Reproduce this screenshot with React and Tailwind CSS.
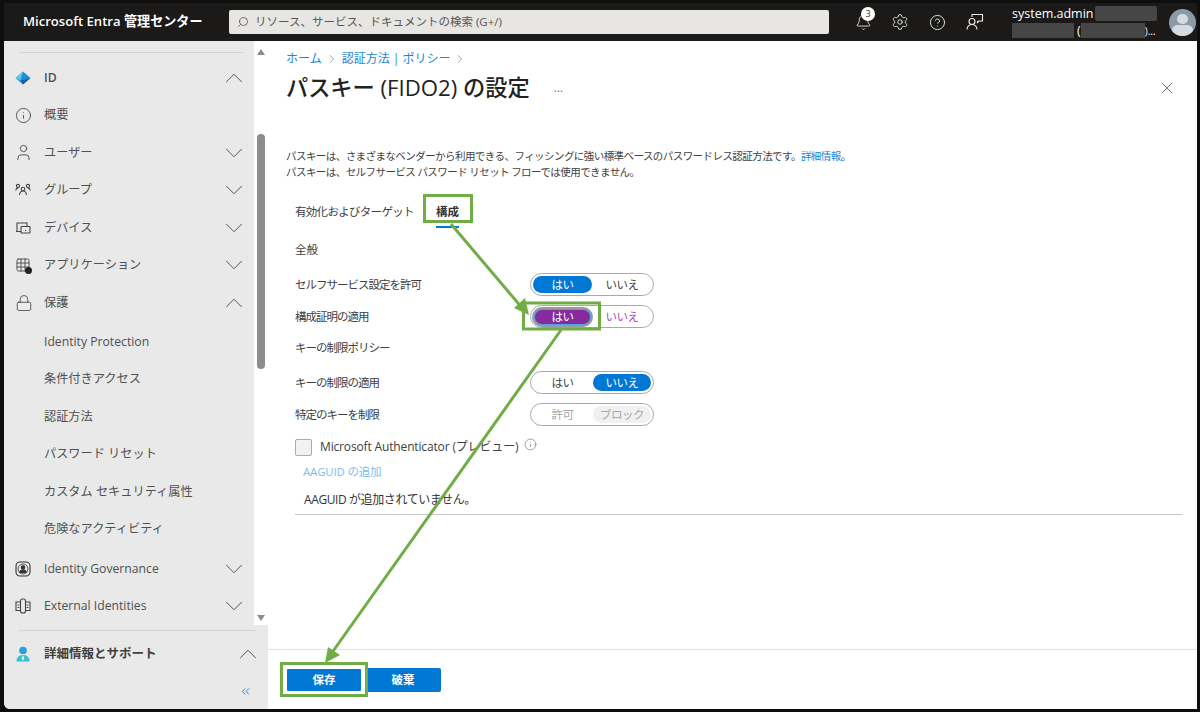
import React from "react";
import { ChevronDown, ChevronUp, ChevronRight, Info, User, Lock, Grid3x3, Bell, Settings, CircleHelp, Search, X, ChevronsLeft } from "lucide-react";

const font = "font-['Open_Sans','Noto_Sans_CJK_JP',sans-serif]";

function GroupIcon() {
  return (
    <svg width="16" height="16" viewBox="0 0 16 16" fill="none" stroke="#444" strokeWidth="1.100">
      <circle cx="3" cy="4" r="1.600" /><circle cx="13" cy="4" r="1.600" /><circle cx="8" cy="7" r="1.800" />
      <path d="M.7 8.500c.2-1.500 1-2.400 2.300-2.600M15.300 8.500c-.2-1.500-1-2.400-2.300-2.600M4.500 13c.2-2.400 1.600-4 3.500-4s3.300 1.600 3.500 4" />
    </svg>
  );
}
function IdIcon() {
  return (
    <svg width="16" height="16" viewBox="0 0 16 16">
      <path d="M8 1.500 15.500 8 8 14.500.5 8z" fill="#1f8fd8" />
      <path d="M8 1.500.5 8l5 2.500z" fill="#5cc4ee" />
      <path d="M8 14.500 5.500 10.500 10.500 9.500 15.500 8z" fill="#1463a8" />
    </svg>
  );
}
function GovIcon() {
  return (
    <svg width="16" height="16" viewBox="0 0 16 16" fill="none" stroke="#333" strokeWidth="1.100">
      <rect x="1" y="1" width="14" height="14" rx="4" />
      <circle cx="8" cy="8" r="5" strokeWidth=".8" />
      <circle cx="8" cy="6.500" r="1.700" fill="#333" />
      <path d="M4.800 11.500c0-1.500 1.400-2.500 3.200-2.500s3.200 1 3.200 2.500z" fill="#333" />
    </svg>
  );
}
function ExtIcon() {
  return (
    <svg width="16" height="16" viewBox="0 0 16 16" fill="none" stroke="#444" strokeWidth="1.100">
      <path d="M5.500 4H1v8.500h4.500M10.500 4H15v8.500h-4.500" />
      <rect x="5.500" y="1" width="5" height="14" rx="2" />
      <path d="M2.500 7h2M2.500 9.500h2M11.500 7h2M11.500 9.500h2" strokeWidth=".9" />
    </svg>
  );
}
function AppIcon() {
  return (
    <span className="relative flex">
      <Grid3x3 size={16} strokeWidth={1.200} color="#333" />
      <span className="absolute -right-[1px] -bottom-[1px] w-[7px] h-[7px] rounded-full bg-[#222]" />
    </span>
  );
}
function DeviceIcon() {
  return (
    <svg width="16" height="16" viewBox="0 0 16 16" fill="none" stroke="#444" strokeWidth="1.100">
      <path d="M2 11.500V3h10v3" />
      <path d="M1 11.500h5" />
      <rect x="6" y="6.500" width="9" height="6.500" rx=".5" fill="#e9e9e9" />
      <path d="M10 10.500h1" />
    </svg>
  );
}
function SupportIcon() {
  return (
    <svg width="14" height="16" viewBox="0 0 14 16">
      <circle cx="7" cy="4.500" r="3.800" fill="#2a9fd8" />
      <path d="M.5 15.500c0-4.500 2.800-6.500 6.500-6.500s6.500 2 6.500 6.500z" fill="#35c0d8" />
      <path d="M7 9l-1.300 3.500L7 14.500l1.300-2z" fill="#fff" />
    </svg>
  );
}
function FeedbackIcon() {
  return (
    <svg width="18" height="18" viewBox="0 0 18 18" fill="none" stroke="#eee" strokeWidth="1.100">
      <path d="M6 4V1.500h10.500V8H13l-1.500 1.500V8" />
      <circle cx="6" cy="8.500" r="3" />
      <path d="M1 16.500c0-3 2.200-5 5-5s5 2 5 5" />
    </svg>
  );
}

function NavRow({ icon, label, open, chevron = true, className = "" }) {
  return (
    <div className={`flex items-center h-[37.500px] pl-[11px] pr-[5px] text-[12.200px] text-[#505050] ${className}`}>
      <span className="w-[29px] flex items-center shrink-0">{icon}</span>
      <span className="flex-1 whitespace-nowrap">{label}</span>
      {chevron && (open
        ? <ChevronUp size={30} strokeWidth={0.800} color="#555" />
        : <ChevronDown size={30} strokeWidth={0.800} color="#555" />)}
    </div>
  );
}

function Toggle({ a, b, active, purple, disabled }) {
  return (
    <div className="w-[124px] h-[23px] rounded-full border border-[#a8a8a8] bg-white flex items-center p-[2px] text-[11.500px] tracking-[-0.5px]">
      <span className={`rounded-full flex items-center justify-center ${
        active === 0
          ? (purple
            ? "w-[55px] h-[14px] mx-[2px] bg-[#862a9e] text-white shadow-[0_0_0_1px_#4aa3e6,0_0_0_3px_#9a9a9a]"
            : "w-[59px] h-[17px] bg-[#0078d4] text-white")
          : disabled ? "w-[59px] h-[17px] text-[#a6a6a6]" : "w-[59px] h-[17px] text-[#444]"}`}>{a}</span>
      <span className={`flex-1 h-[17px] rounded-full flex items-center justify-center ml-[1px] ${
        active === 1 ? (disabled ? "bg-[#f0f0f0] text-[#a6a6a6]" : "bg-[#0078d4] text-white") : purple ? "text-[#a84dbf]" : "text-[#444]"}`}>{b}</span>
    </div>
  );
}

function FormRow({ label, children, className = "" }) {
  return (
    <div className={`flex items-center h-[23px] ${className}`}>
      <span className="w-[235px] shrink-0 text-[11.500px] tracking-[-1px] text-[#404040] whitespace-nowrap">{label}</span>
      {children}
    </div>
  );
}

function Annotations() {
  return (
    <svg className="absolute inset-0 pointer-events-none" width="1200" height="712" viewBox="0 0 1200 712" fill="none">
      <g stroke="#70ad47">
        <rect x="424.500" y="195.500" width="47" height="26" strokeWidth="3" />
        <rect x="523.500" y="303" width="76" height="26" strokeWidth="3" />
        <rect x="281.500" y="663.500" width="85" height="32" strokeWidth="3" />
        <path d="M451 224 L523 309" strokeWidth="3" />
        <path d="M561 330 L331 654" strokeWidth="3" />
      </g>
      <path d="M529 315 L514 308 L525 298 Z" fill="#70ad47" />
      <path d="M325 663 L328 647 L340 655 Z" fill="#70ad47" />
    </svg>
  );
}

export default function App() {
  return (
    <div className={`relative w-[1200px] h-[712px] bg-[#0e0e0e] pt-[3px] pl-[4px] pr-[3px] pb-[3px] overflow-hidden ${font}`}>
      <div className="h-full flex flex-col overflow-hidden rounded-bl-[6px] bg-white">
        <header className="h-[38px] shrink-0 bg-[#1b1a19] flex items-center text-white">
          <div className="w-[225px] pl-[19px] text-[13.100px] font-semibold whitespace-nowrap shrink-0">Microsoft Entra 管理センター</div>
          <div className="w-[600px] h-[24px] bg-[#e8e6e3] rounded-[2px] flex items-center pl-[8px] gap-[6px] text-[11.500px] text-[#555] shrink-0">
            <Search size={12} strokeWidth={1.400} color="#444" className="-scale-x-100" />
            <span>リソース、サービス、ドキュメントの検索 (G+/)</span>
          </div>
          <div className="flex items-center ml-[26px] gap-[20px] shrink-0">
            <span className="relative flex">
              <Bell size={17} strokeWidth={1.200} color="#eee" />
              <span className="absolute -top-[7px] left-[6px] w-[14px] h-[14px] rounded-full bg-white text-[#333] text-[9px] flex items-center justify-center">3</span>
            </span>
            <Settings size={18} strokeWidth={1.200} color="#eee" className="-ml-[1px]" />
            <CircleHelp size={17} strokeWidth={1.300} color="#eee" />
            <FeedbackIcon />
          </div>
          <div className="ml-[28px] w-[157px] text-[12.500px] leading-[16px] shrink-0 overflow-hidden">
            <div className="flex items-center h-[17px]">
              <span>system.admin</span>
              <span className="w-[62px] h-[15px] ml-[1px] bg-[#464646] rounded-[2px]" />
            </div>
            <div className="flex items-center h-[17px]">
              <span className="w-[62px] h-[15px] bg-[#464646]" />
              <span className="ml-[3px]">(</span>
              <span className="w-[64px] h-[15px] bg-[#464646]" />
              <span className="text-[10px]">)…</span>
            </div>
          </div>
          <div className="w-[27px] h-[27px] rounded-full bg-[#8c99a6] shrink-0 overflow-hidden flex flex-col items-center">
            <span className="w-[11px] h-[11px] rounded-full bg-[#d4dbe2] mt-[5px]" />
            <span className="w-[21px] h-[12px] rounded-full bg-[#d4dbe2] mt-[1px]" />
          </div>
        </header>

        <div className="flex-1 flex min-h-0">
          <aside className="w-[264px] shrink-0 flex flex-col bg-[#e9e9e9]">
            <div className="flex h-[584px]">
              <nav className="w-[250px] shrink-0 pt-[11px]">
                <div className="h-px bg-[#d4d4d4] ml-[15px] mr-[11px]" />
                <div className="pt-[6px]">
                  <NavRow icon={<IdIcon />} label={<span className="font-semibold">ID</span>} open />
                  <NavRow icon={<Info size={17} strokeWidth={1.100} color="#333" />} label="概要" chevron={false} />
                  <NavRow icon={<User size={19} strokeWidth={1} color="#333" className="-ml-[1px]" />} label="ユーザー" />
                  <NavRow icon={<GroupIcon />} label="グループ" />
                  <NavRow icon={<DeviceIcon />} label="デバイス" />
                  <NavRow icon={<AppIcon />} label="アプリケーション" />
                  <NavRow icon={<Lock size={18} strokeWidth={1} color="#333" />} label="保護" open />
                  <NavRow label="Identity Protection" chevron={false} className="mt-[1.500px]" />
                  <NavRow label="条件付きアクセス" chevron={false} />
                  <NavRow label="認証方法" chevron={false} />
                  <NavRow label="パスワード リセット" chevron={false} />
                  <NavRow label="カスタム セキュリティ属性" chevron={false} />
                  <NavRow label="危険なアクティビティ" chevron={false} />
                  <NavRow icon={<GovIcon />} label="Identity Governance" className="mt-[2px]" />
                  <NavRow icon={<ExtIcon />} label="External Identities" />
                </div>
              </nav>
              <div className="w-[14px] bg-white flex flex-col items-center relative">
                <span className="mt-[8px] w-0 h-0 border-x-[4px] border-x-transparent border-b-[6px] border-b-[#8c8c8c]" />
                <span className="mt-[79px] w-[8px] h-[235px] rounded-full bg-[#8c8c8c]" />
                <span className="mt-auto mb-[4px] w-0 h-0 border-x-[4px] border-x-transparent border-t-[6px] border-t-[#8c8c8c]" />
              </div>
            </div>
            <div className="flex-1 min-h-0">
              <div className="h-px bg-[#d4d4d4] ml-[15px] mr-[12px] mt-[5px]" />
              <div className="flex items-center h-[46px] pl-[12px] pr-[5px] text-[12.500px] font-semibold text-[#404040]">
                <span className="w-[28px] flex"><SupportIcon /></span>
                <span className="flex-1">詳細情報とサポート</span>
                <ChevronUp size={30} strokeWidth={0.800} color="#555" />
              </div>
              <div className="flex justify-end pr-[16px] mt-[8px]">
                <ChevronsLeft size={13} strokeWidth={1.800} color="#1a86d8" />
              </div>
            </div>
          </aside>

          <main className="flex-1 flex flex-col min-w-0">
            <div className="flex-1 pl-[18px] pr-[15px] relative">
              <div className="flex items-center h-[18px] mt-[9px] text-[12px] text-[#1a86d8]">
                <span>ホーム</span>
                <ChevronRight size={14} strokeWidth={1} color="#666" className="mx-[3px]" />
                <span>認証方法 | ポリシー</span>
                <ChevronRight size={14} strokeWidth={1} color="#666" className="mx-[3px]" />
              </div>
              <div className="flex items-center h-[32px] mt-[4px]">
                <h1 className="text-[22.200px] font-medium text-[#222] whitespace-nowrap">パスキー (FIDO2) の設定</h1>
                <span className="ml-[24px] text-[12px] text-[#777]">…</span>
                <X size={20} strokeWidth={0.900} color="#444" className="ml-auto mr-[5px]" />
              </div>
              <p className="mt-[44px] text-[10.500px] tracking-[-0.56px] leading-[16px] text-[#404040] whitespace-nowrap">
                パスキーは、さまざまなベンダーから利用できる、フィッシングに強い標準ベースのパスワードレス認証方法です。<span className="text-[#1a86d8]">詳細情報</span>。
                <br />パスキーは、セルフサービス パスワード リセット フローでは使用できません。
              </p>
              <div className="flex items-center mt-[20px] ml-[9px] h-[24px] text-[11.500px] text-[#404040]">
                <span className="w-[141px] tracking-[-0.7px]">有効化およびターゲット</span>
                <span className="relative font-bold text-[#333]">構成
                  <span className="absolute left-0 right-0 -bottom-[7px] h-[2px] bg-[#0078d4]" />
                </span>
              </div>
              <div className="ml-[9px]">
                <div className="mt-[17px] text-[11.500px] text-[#404040] h-[18px]">全般</div>
                <FormRow label="セルフサービス設定を許可" className="mt-[14px]">
                  <Toggle a="はい" b="いいえ" active={0} />
                </FormRow>
                <FormRow label="構成証明の適用" className="mt-[9px]">
                  <Toggle a="はい" b="いいえ" active={0} purple />
                </FormRow>
                <div className="mt-[11px] h-[16px] text-[11.500px] tracking-[-1px] text-[#404040]">キーの制限ポリシー</div>
                <FormRow label="キーの制限の適用" className="mt-[16px]">
                  <Toggle a="はい" b="いいえ" active={1} />
                </FormRow>
                <FormRow label="特定のキーを制限" className="mt-[9px]">
                  <Toggle a="許可" b="ブロック" active={1} disabled />
                </FormRow>
                <div className="flex items-center mt-[11px] h-[20px]">
                  <span className="w-[17px] h-[17px] rounded-[2px] border border-[#aaa] bg-[#f3f2f1]" />
                  <span className="ml-[8px] text-[12px] tracking-[-0.15px] text-[#404040]">Microsoft Authenticator (プレビュー)</span>
                  <Info size={13} strokeWidth={1} color="#555" className="ml-[6px] -mt-[6px]" />
                </div>
                <div className="ml-[8px] mt-[6px] h-[18px] text-[11.500px] tracking-[-0.2px] text-[#7dbdec]">AAGUID の追加</div>
                <div className="ml-[9px] mt-[10px] h-[18px] text-[12px] tracking-[-0.4px] text-[#333]">AAGUID が追加されていません。</div>
                <div className="mt-[5px] h-px bg-[#c8c8c8]" />
              </div>
            </div>
            <footer className="h-[60px] shrink-0 border-t border-[#e3e3e3] pl-[18px] pt-[18px] flex items-start">
              <button className="w-[76px] h-[24px] bg-[#0078d4] text-white text-[11.500px] font-semibold rounded-[2px] border border-white">保存</button>
              <button className="w-[76px] h-[24px] bg-[#0078d4] text-white text-[11.500px] font-semibold rounded-[2px] ml-[3px]">破棄</button>
            </footer>
          </main>
        </div>
      </div>
      <Annotations />
    </div>
  );
}
